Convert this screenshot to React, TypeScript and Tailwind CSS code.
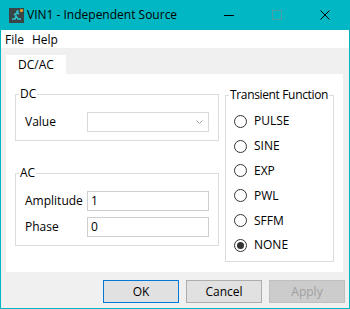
import React from 'react';

const TEAL = 'bg-[#00b7c3]';

const AppIcon = () => (
  <svg width="15" height="15" viewBox="0 0 15 15">
    <rect x="0" y="0" width="15" height="15" fill="#3b4548" />
    <path d="M3 11h3l1-3 2 3h3" stroke="#2ec4cc" strokeWidth="1.6" fill="none" />
    <path d="M5 7l3-2 2 1" stroke="#2ec4cc" strokeWidth="1.6" fill="none" />
    <circle cx="8.5" cy="3.5" r="1.3" fill="#2ec4cc" />
    <circle cx="12.5" cy="2.5" r="1.6" fill="#f5a623" />
  </svg>
);

const Radio = ({ label, checked }: { label: string; checked?: boolean }) => (
  <div className="flex h-[24.8px] items-center">
    <span className="flex h-[13px] w-[13px] items-center justify-center rounded-full border border-[#333333] bg-white">
      {checked && <span className="h-[7px] w-[7px] rounded-full bg-[#333333]" />}
    </span>
    <span className="ml-[7px]">{label}</span>
  </div>
);

const Field = ({ label, value }: { label: string; value: string }) => (
  <div className="flex items-center">
    <span className="w-[62px]">{label}</span>
    <div className="flex h-[20px] w-[122px] items-center border border-[#cfcfcf] bg-white pl-[3px]">
      {value}
    </div>
  </div>
);

export default function App() {
  return (
    <div className="flex h-[309px] w-[350px] flex-col font-['Open_Sans',sans-serif] text-[12px] leading-[16px] text-black">
      {/* title bar */}
      <div className={`flex h-[30px] shrink-0 items-center pr-[1px] ${TEAL}`}>
        <div className="ml-[9px] flex items-center">
          <AppIcon />
        </div>
        <span className="ml-[3px] text-[12px]">VIN1 - Independent Source</span>
        <div className="ml-auto flex h-full">
          <div className="flex w-[48px] items-center justify-center">
            <span className="h-px w-[10px] bg-black" />
          </div>
          <div className="flex w-[48px] items-center justify-center">
            <span className="h-[10px] w-[10px] border border-[#4f9ea3]" />
          </div>
          <div className="flex w-[48px] items-center justify-center">
            <svg width="10" height="10" viewBox="0 0 10 10">
              <path d="M0.5 0.5l9 9M9.5 0.5l-9 9" stroke="#000" strokeWidth="1" />
            </svg>
          </div>
        </div>
      </div>

      <div className="flex flex-1 flex-col border-x border-b border-[#00b7c3] bg-[#f0f0f0]">
        {/* menu */}
        <div className="flex h-[18px] items-center gap-[8px] bg-white pl-[4px] pt-[2px]">
          <span>File</span>
          <span>Help</span>
        </div>

        {/* tabs */}
        <div className="flex h-[26px] items-end pl-[5px]">
          <div className="flex h-[19px] w-[60px] items-center justify-center bg-white">DC/AC</div>
        </div>

        {/* tab page */}
        <div className="ml-[5px] flex h-[198px] w-[337px] items-start gap-[6px] bg-white pl-[9px] pt-[12px]">
          <div className="flex w-[204px] flex-col gap-[24px]">
            <fieldset className="border border-[#dcdcdc] pb-[8px]">
              <legend className="ml-[3px] px-[1px]">DC</legend>
              <div className="mt-[10px] flex items-center pl-[9px]">
                <span className="w-[62px]">Value</span>
                <div className="flex h-[20px] w-[122px] items-center justify-end border border-[#d9d9d9] bg-white pr-[5px]">
                  <svg width="7" height="4" viewBox="0 0 7 4">
                    <path d="M0.5 0.5l3 3 3-3" stroke="#a0a0a0" fill="none" />
                  </svg>
                </div>
              </div>
            </fieldset>
            <fieldset className="border border-[#dcdcdc] pb-[8px]">
              <legend className="ml-[3px] px-[1px]">AC</legend>
              <div className="mt-[10px] flex flex-col gap-[6px] pl-[9px]">
                <Field label="Amplitude" value="1" />
                <Field label="Phase" value="0" />
              </div>
            </fieldset>
          </div>

          <fieldset className="mt-[1px] w-[109px] border border-[#dcdcdc] pb-[3px] pl-[8px]">
            <legend className="-ml-[5px] whitespace-nowrap px-[1px] tracking-[-0.35px]">Transient Function</legend>
            <div className="mt-[6px] flex flex-col">
              <Radio label="PULSE" />
              <Radio label="SINE" />
              <Radio label="EXP" />
              <Radio label="PWL" />
              <Radio label="SFFM" />
              <Radio label="NONE" checked />
            </div>
          </fieldset>
        </div>

        {/* buttons */}
        <div className="mt-[8px] flex justify-end gap-[7px] pr-[4px]">
          <button className="h-[23px] w-[76px] border border-[#0078d7] bg-[#e1e1e1]">OK</button>
          <button className="h-[23px] w-[76px] border border-[#adadad] bg-[#e1e1e1]">Cancel</button>
          <button className="h-[23px] w-[76px] border border-[#bfbfbf] bg-[#cccccc] text-[#a0a0a0]">Apply</button>
        </div>
      </div>
    </div>
  );
}
